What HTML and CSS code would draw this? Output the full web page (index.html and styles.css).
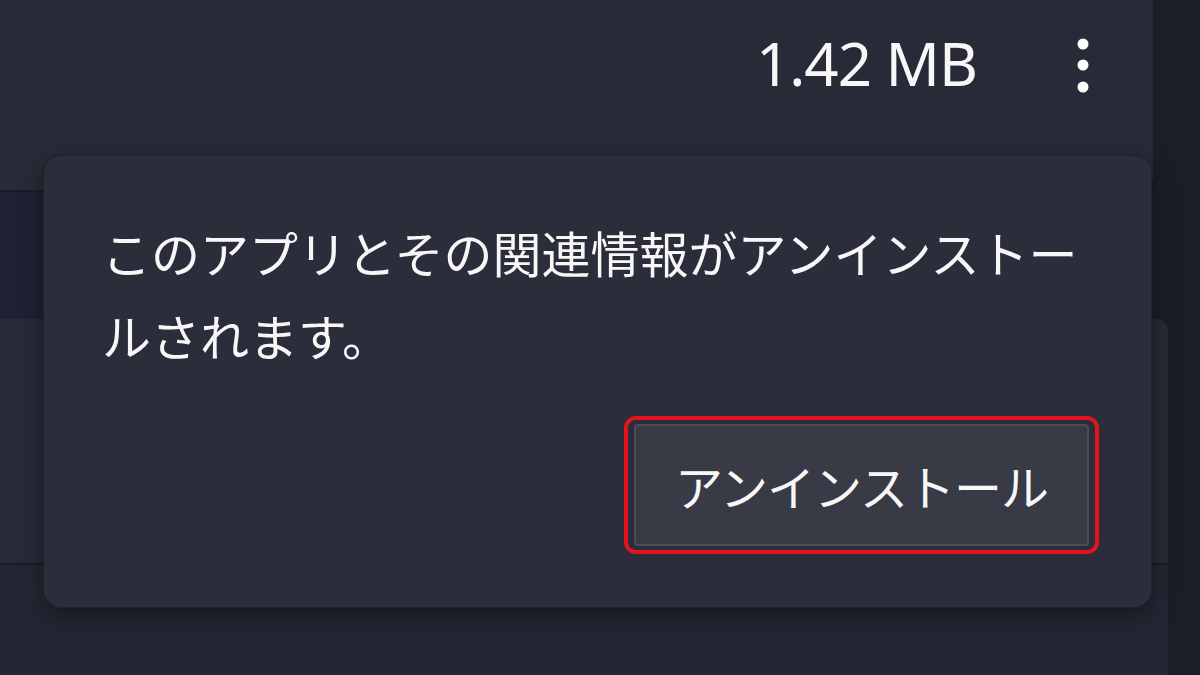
FILE: index.html
```html
<!DOCTYPE html>
<html lang="ja">
<head>
    <meta charset="UTF-8">
    <meta name="viewport" content="width=device-width, initial-scale=1.0">
    <title>アプリのアンインストール</title>
    <link rel="stylesheet" href="styles.css">
</head>
<body>
    <div class="app-list">
        <div class="app-row app-row-top">
            <span class="app-size">1.42 MB</span>
            <button class="more-btn" aria-label="その他のオプション">
                <svg width="14" height="58" viewBox="0 0 14 58">
                    <circle cx="7" cy="7" r="5.5" fill="#ffffff"/>
                    <circle cx="7" cy="28" r="5.5" fill="#ffffff"/>
                    <circle cx="7" cy="50" r="5.5" fill="#ffffff"/>
                </svg>
            </button>
        </div>
        <div class="app-band"></div>
        <div class="app-row app-row-mid"></div>
        <div class="app-rest"></div>
    </div>

    <div class="flyout">
        <p class="flyout-text">このアプリとその関連情報がアンインストールされます。</p>
        <div class="flyout-actions">
            <div class="highlight">
                <button class="uninstall-btn">アンインストール</button>
            </div>
        </div>
    </div>
</body>
</html>
```

FILE: styles.css
```css
body {
    margin: 0;
    height: 675px;
    overflow: hidden;
    background-color: #1c1e27;
    font-family: "Noto Sans CJK JP", "Noto Sans", sans-serif;
    color: #f7f7f7;
}
.app-list {
    display: flex;
    flex-direction: column;
    height: 675px;
}
.app-row {
    background-color: #282a37;
}
.app-row-top {
    height: 190px;
    margin-right: 47px;
    border-bottom-right-radius: 12px;
    display: flex;
    justify-content: flex-end;
    align-items: flex-start;
    gap: 99px;
    padding: 22px 63px 0 0;
    box-sizing: border-box;
    box-shadow: 0 2px 0 #1a1c26;
}
.app-size {
    font-family: "Noto Sans", sans-serif;
    font-size: 60px;
    line-height: 82px;
    letter-spacing: -1px;
}
.more-btn {
    background: none;
    border: none;
    padding: 15px 0 0 0;
    line-height: 0;
}
.app-band {
    height: 126px;
    margin-top: 3px;
    margin-right: 47px;
    background-color: #1f2234;
}
.app-row-mid {
    height: 244px;
    margin-right: 32px;
    border-top-right-radius: 12px;
    border-bottom: 2px solid #181a22;
}
.app-rest {
    flex: 1;
    background-color: #242633;
    margin-right: 32px;
}
.flyout {
    position: absolute;
    left: 43px;
    top: 155px;
    width: 1109px;
    height: 453px;
    box-sizing: border-box;
    padding: 54px 52px 55px 58px;
    background-color: #2b2d3a;
    border: 1px solid #1f212b;
    border-radius: 18px;
    box-shadow: 0 8px 24px rgba(0, 0, 0, 0.4);
    display: flex;
    flex-direction: column;
}
.flyout-text {
    margin: 0;
    width: 1000px;
    font-size: 49px;
    line-height: 83px;
}
.flyout-actions {
    margin-top: 40px;
    display: flex;
    justify-content: flex-end;
}
.highlight {
    padding: 4px 6px;
    border: 4px solid #e2141c;
    border-radius: 12px;
}
.uninstall-btn {
    display: block;
    width: 455px;
    height: 122px;
    background-color: #383a45;
    border: 2px solid #4a4c56;
    border-radius: 4px;
    color: #f7f7f7;
    font-family: "Noto Sans CJK JP", sans-serif;
    font-size: 48px;
    letter-spacing: -1px;
}
```
